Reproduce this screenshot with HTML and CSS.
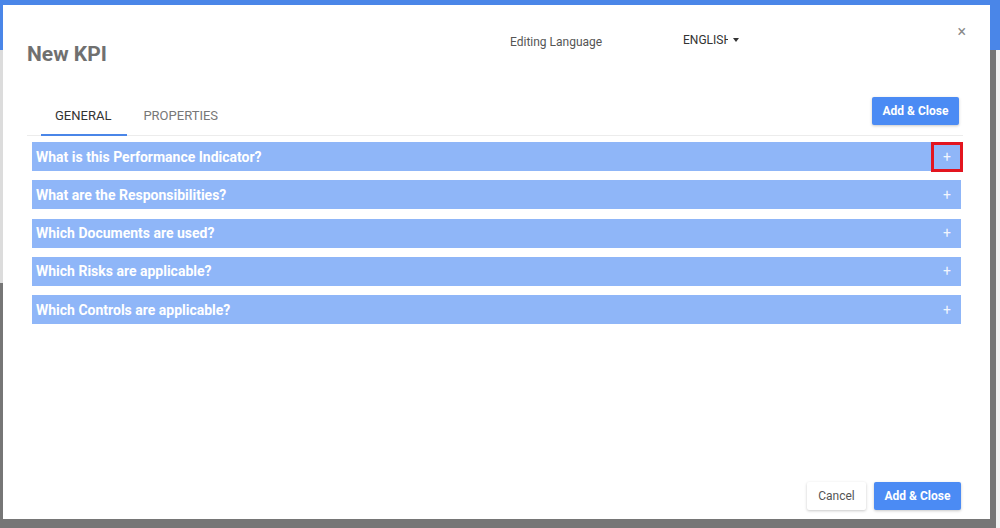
FILE: index.html
```html
<!DOCTYPE html>
<html>
<head>
<meta charset="utf-8">
<link rel="stylesheet" href="styles.css">
</head>
<body>
<div class="modal">
  <div class="header">
    <h1 class="title">New KPI</h1>
    <div class="lang-label">Editing Language</div>
    <div class="lang-select"><span class="lang-value">ENGLISH</span><span class="caret"></span></div>
    <div class="close">×</div>
  </div>
  <div class="tabbar">
    <div class="tabs">
      <div class="tab active">GENERAL</div>
      <div class="tab">PROPERTIES</div>
    </div>
    <button class="btn primary top-btn">Add &amp; Close</button>
  </div>
  <div class="accordion">
    <div class="row"><span>What is this Performance Indicator?</span><span class="plus">+</span><span class="highlight"></span></div>
    <div class="row"><span>What are the Responsibilities?</span><span class="plus">+</span></div>
    <div class="row"><span>Which Documents are used?</span><span class="plus">+</span></div>
    <div class="row"><span>Which Risks are applicable?</span><span class="plus">+</span></div>
    <div class="row"><span>Which Controls are applicable?</span><span class="plus">+</span></div>
  </div>
  <div class="footer">
    <button class="btn secondary">Cancel</button>
    <button class="btn primary">Add &amp; Close</button>
  </div>
</div>
</body>
</html>
```

FILE: styles.css
```css
html, body {
  margin: 0;
  padding: 0;
  width: 1000px;
  height: 528px;
  overflow: hidden;
}
body {
  font-family: Roboto, "Liberation Sans", Arial, sans-serif;
  background:
    linear-gradient(#4a86e8, #4a86e8) 0 0 / 100% 50px no-repeat,
    linear-gradient(#dcdcdc, #dcdcdc) 0 0 / 10px 283px no-repeat,
    linear-gradient(#f2f2f2, #f2f2f2) 996px 0 / 4px 100% no-repeat,
    #767676;
  position: relative;
}
.modal {
  position: absolute;
  left: 3px;
  top: 5px;
  width: 987px;
  height: 514px;
  background: #fff;
  box-sizing: border-box;
  padding: 0 27px 0 24px;
  display: flex;
  flex-direction: column;
}
.header {
  display: grid;
  grid-template-columns: 483px 173px 1fr auto;
  align-items: start;
  height: 65px;
}
.title {
  margin: 37px 0 0 0;
  font-size: 21px;
  line-height: 24px;
  font-weight: 700;
  color: #707070;
}
.lang-label {
  margin-top: 30px;
  font-size: 12px;
  line-height: 14px;
  color: #555;
}
.lang-select {
  margin-top: 28px;
  display: flex;
  align-items: center;
  font-size: 12px;
  line-height: 14px;
  color: #333;
}
.lang-value {
  display: inline-block;
  width: 45px;
  overflow: hidden;
  white-space: nowrap;
}
.caret {
  width: 0;
  height: 0;
  margin-left: 5px;
  border-left: 3.5px solid transparent;
  border-right: 3.5px solid transparent;
  border-top: 4px solid #333;
}
.close {
  margin-top: 19px;
  margin-right: -3px;
  font-size: 16px;
  line-height: 16px;
  color: #8a8a8a;
}
.tabbar {
  margin-top: 27px;
  display: flex;
  justify-content: space-between;
  align-items: flex-start;
  border-bottom: 1px solid #ececec;
}
.tabs {
  display: flex;
  margin-left: 14px;
}
.tab {
  padding: 11px 15px 11px 16px;
  font-size: 13px;
  line-height: 15px;
  color: #777;
  border-bottom: 2px solid transparent;
  margin-bottom: -1px;
}
.tab.active {
  color: #333;
  border-bottom-color: #4a86e8;
  padding-left: 14px;
  padding-right: 16px;
}
.btn {
  font-family: Roboto, "Liberation Sans", Arial, sans-serif;
  font-size: 12px;
  border: none;
  border-radius: 2px;
  box-shadow: 0 1px 3px rgba(0, 0, 0, 0.22);
  cursor: pointer;
  padding: 0;
}
.btn.primary {
  background: #4b8bf4;
  color: #fff;
  font-weight: 700;
  width: 87px;
  height: 28px;
}
.btn.secondary {
  background: #fff;
  color: #555;
  width: 59px;
  height: 28px;
}
.top-btn {
  margin-right: 4px;
  margin-top: 0;
  width: 88px;
  height: 27px;
}
.accordion {
  margin: 6px 2px 0 5px;
  display: flex;
  flex-direction: column;
  gap: 9.3px;
}
.row {
  position: relative;
  height: 29px;
  background: #8fb6f8;
  display: flex;
  align-items: center;
  justify-content: space-between;
  padding: 0 10px 0 4px;
  color: #fff;
  font-weight: 700;
  font-size: 14px;
}
.plus {
  font-weight: 400;
  font-size: 14px;
  color: rgba(255, 255, 255, 0.9);
}
.highlight {
  position: absolute;
  right: -2px;
  top: 0;
  width: 32px;
  height: 30px;
  box-sizing: border-box;
  border: 3px solid #e3151f;
}
.footer {
  margin-top: auto;
  margin-bottom: 9px;
  margin-right: 2px;
  display: flex;
  justify-content: flex-end;
  gap: 8px;
}
```
